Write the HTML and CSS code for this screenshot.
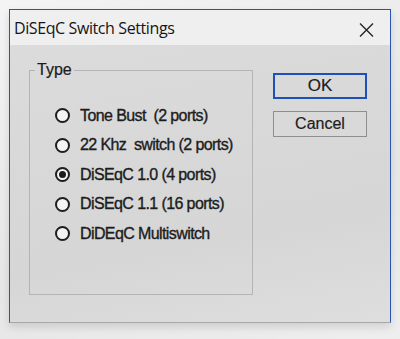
FILE: index.html
```html
<!DOCTYPE html>
<html lang="en">
<head>
    <meta charset="UTF-8">
    <title>DiSEqC Switch Settings</title>
    <link rel="stylesheet" href="styles.css">
</head>
<body>

    <!-- Dialog Window -->
    <div class="dialog">
        <div class="titlebar">
            <p class="title">DiSEqC Switch Settings</p>
            <svg class="close" width="15" height="14" viewBox="0 0 15 14">
                <path d="M1 0.5 L14 13.5 M14 0.5 L1 13.5" stroke="#222" stroke-width="1.3" fill="none"/>
            </svg>
        </div>

        <div class="content">
            <!-- Type group -->
            <fieldset class="group">
                <legend>Type</legend>
                <label class="opt"><span class="radio"></span>Tone Bust&nbsp; (2 ports)</label>
                <label class="opt"><span class="radio"></span>22 Khz&nbsp; switch (2 ports)</label>
                <label class="opt"><span class="radio checked"></span>DiSEqC 1.0 (4 ports)</label>
                <label class="opt"><span class="radio"></span>DiSEqC 1.1 (16 ports)</label>
                <label class="opt"><span class="radio"></span>DiDEqC Multiswitch</label>
            </fieldset>

            <!-- Buttons -->
            <div class="buttons">
                <button class="btn default">OK</button>
                <button class="btn">Cancel</button>
            </div>
        </div>
    </div>

</body>
</html>
```

FILE: styles.css
```css
body {
    margin: 0;
    padding: 9px 10px 0 9px;
    height: 339px;
    box-sizing: border-box;
    background: linear-gradient(160deg, #f4f4f4, #e6e6e6 60%, #eeeeee);
    font-family: "Liberation Sans", Arial, sans-serif;
    color: #1c1c1c;
    overflow: hidden;
}

.dialog {
    width: 380px;
    height: 312px;
    border: 1px solid #2a54b0;
    border-bottom-color: #a8a8a8;
    background: linear-gradient(170deg, #dcdcdc, #d6d6d6 70%, #dedede);
    box-shadow: 0 4px 8px rgba(0, 0, 0, 0.12);
}

/* Title Bar */
.titlebar {
    display: flex;
    justify-content: space-between;
    align-items: center;
    height: 35px;
    padding: 0 16px 0 4px;
    background-color: #efefef;
}

.title {
    margin: 0;
    font-family: "Open Sans", sans-serif;
    font-size: 16px;
    letter-spacing: -0.4px;
    color: #151515;
}

.close {
    margin-top: 4px;
}

.content {
    display: flex;
    padding: 16px 0 0 19px;
}

/* Group Box */
.group {
    width: 224px;
    height: 234px;
    margin: 0;
    padding: 27px 0 0 0;
    border: 1px solid #b4b4b4;
    box-sizing: border-box;
    display: flex;
    flex-direction: column;
    gap: 10.5px;
}

.group legend {
    font-size: 16px;
    padding: 0 2px;
    margin-left: 5px;
    -webkit-text-stroke: 0.2px #1c1c1c;
}

.opt {
    display: flex;
    align-items: center;
    gap: 10px;
    height: 19px;
    margin-left: 25px;
    font-size: 16px;
    letter-spacing: -0.6px;
    -webkit-text-stroke: 0.35px #1c1c1c;
}

.radio {
    width: 11px;
    height: 11px;
    border: 2px solid #1e1e1e;
    border-radius: 50%;
    background-color: #f4f4f4;
    position: relative;
    flex-shrink: 0;
}

.radio.checked::after {
    content: '';
    position: absolute;
    top: 2px;
    left: 2px;
    width: 7px;
    height: 7px;
    border-radius: 50%;
    background-color: #1a1a1a;
}

/* Buttons */
.buttons {
    display: flex;
    flex-direction: column;
    gap: 12px;
    margin-left: 20px;
    padding-top: 12px;
}

.btn {
    width: 94px;
    height: 26px;
    background-color: #d9d9d9;
    border: 1px solid #8e8e8e;
    font-family: "Liberation Sans", Arial, sans-serif;
    font-size: 16px;
    color: #1c1c1c;
    padding: 0;
    -webkit-text-stroke: 0.2px #1c1c1c;
}

.btn.default {
    border: 2px solid #1f4fb8;
    font-size: 17px;
}
```
